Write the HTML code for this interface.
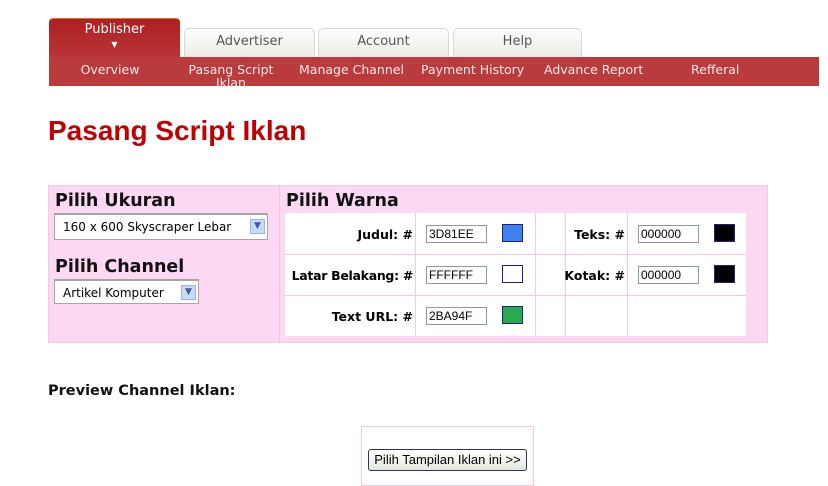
<!DOCTYPE html>
<html><head><style>
body{margin:0;width:828px;height:480px;background:#fff;position:relative;overflow:hidden;font-family:"DejaVu Sans",Verdana,sans-serif}
.a{position:absolute}
.tab{position:absolute;top:28px;height:29px;background:linear-gradient(#fdfdfc,#ecebe7);border:1px solid #d8d8d4;border-bottom:none;border-radius:5px 5px 0 0;box-sizing:border-box;text-align:center;font-size:13px;color:#555;line-height:26px;font-family:"DejaVu Sans",sans-serif}
.sub{position:absolute;top:63px;font-size:12.5px;color:#fbe9e9;text-align:center;line-height:13px;white-space:nowrap}
.lbl{font-weight:bold;font-size:12.5px;color:#000;text-align:right;white-space:nowrap}
.inp{position:absolute;width:61px;height:18px;border:1px solid #8a9ba8;box-sizing:border-box;font:12px "Liberation Sans",Arial,sans-serif;line-height:16px;padding-left:2px;color:#000;background:#fff}
.sw{position:absolute;width:21px;height:18px;border:1px solid #1a237e;box-sizing:border-box}
.h{font-weight:bold;font-size:17.5px;color:#111}
.sel{position:absolute;background:#fff;border:1px solid #a5a5a5;border-top:2px solid #a5a5a5;box-sizing:border-box;font-size:12px;line-height:24px;padding-left:8px;color:#000;white-space:nowrap;overflow:hidden}
.arr{position:absolute;right:2px;top:4px;width:15px;height:15px;background:#c9d8f5;border:1px solid #9fb4e0;box-sizing:border-box;font-size:9px;line-height:13px;text-align:center;color:#3a5b9e}
</style></head><body>
<div class="a" style="left:49px;top:57px;width:770px;height:29px;background:#b93b3d"></div>
<div class="a" style="left:49px;top:18px;width:131px;height:39px;background:linear-gradient(#ad2022,#b83537);border-radius:4px 4px 0 0;border-top:1px solid #d8752f;box-sizing:border-box;text-align:center;color:#fff;font-size:13px;line-height:22px">Publisher<div style="font-size:8px;line-height:8px">▼</div></div>
<div class="tab" style="left:184px;width:131px">Advertiser</div>
<div class="tab" style="left:318px;width:131px">Account</div>
<div class="tab" style="left:453px;width:129px">Help</div>
<div class="sub" style="left:75px;width:70px">Overview</div>
<div class="sub" style="left:180px;width:102px">Pasang Script<br>Iklan</div>
<div class="a" style="left:49px;top:86px;width:770px;height:10px;background:#fff"></div>
<div class="sub" style="left:299px">Manage Channel</div>
<div class="sub" style="left:421px">Payment History</div>
<div class="sub" style="left:544px">Advance Report</div>
<div class="sub" style="left:691px">Refferal</div>
<div class="a" style="left:48px;top:115px;font:bold 28px 'Liberation Sans',Arial,sans-serif;color:#c00000">Pasang Script Iklan</div>
<div class="a" style="left:48px;top:185px;width:720px;height:158px;background:#fcd8f3;border:1px solid #f5c8e8;box-sizing:border-box"></div>
<div class="a" style="left:279px;top:186px;width:1px;height:156px;background:#f5c6e6"></div>
<div class="a h" style="left:55px;top:191px">Pilih Ukuran</div>
<div class="sel" style="left:54px;top:213px;width:214px;height:27px">160 x 600 Skyscraper Lebar<div class="arr">▼</div></div>
<div class="a h" style="left:55px;top:257px">Pilih Channel</div>
<div class="sel" style="left:54px;top:279px;width:145px;height:25px">Artikel Komputer<div class="arr">▼</div></div>
<div class="a h" style="left:286px;top:191px">Pilih Warna</div>
<div class="a" style="left:285px;top:213px;width:461px;height:123px;background:#fff"></div>
<div class="a" style="left:285px;top:254px;width:461px;height:1px;background:#f5c8e8"></div>
<div class="a" style="left:285px;top:295px;width:461px;height:1px;background:#f5c8e8"></div>
<div class="a" style="left:415px;top:213px;width:1px;height:123px;background:#f5c8e8"></div>
<div class="a" style="left:535px;top:213px;width:1px;height:123px;background:#f5c8e8"></div>
<div class="a" style="left:565px;top:213px;width:1px;height:123px;background:#f5c8e8"></div>
<div class="a" style="left:627px;top:213px;width:1px;height:123px;background:#f5c8e8"></div>
<div class="a lbl" style="left:280px;top:227px;width:133px">Judul: #</div>
<div class="a lbl" style="left:280px;top:268px;width:133px;letter-spacing:-0.3px">Latar Belakang: #</div>
<div class="a lbl" style="left:280px;top:309px;width:133px">Text URL: #</div>
<div class="a lbl" style="left:560px;top:227px;width:65px">Teks: #</div>
<div class="a lbl" style="left:560px;top:268px;width:65px">Kotak: #</div>
<div class="inp" style="left:426px;top:225px">3D81EE</div>
<div class="inp" style="left:426px;top:266px">FFFFFF</div>
<div class="inp" style="left:426px;top:307px">2BA94F</div>
<div class="inp" style="left:638px;top:225px">000000</div>
<div class="inp" style="left:638px;top:266px">000000</div>
<div class="sw" style="left:502px;top:224px;background:#3d81ee"></div>
<div class="sw" style="left:502px;top:265px;background:#fff"></div>
<div class="sw" style="left:502px;top:306px;background:#2ba94f"></div>
<div class="sw" style="left:714px;top:224px;background:#000"></div>
<div class="sw" style="left:714px;top:265px;background:#000"></div>
<div class="a" style="left:48px;top:383px;font-weight:bold;font-size:14.5px;color:#111">Preview Channel Iklan:</div>
<div class="a" style="left:361px;top:426px;width:173px;height:60px;border:1px solid #f5c8e8;box-sizing:border-box"></div>
<div class="a" style="left:368px;top:449px;width:159px;height:22px;border:1px solid #2a3a4a;border-radius:3px;box-sizing:border-box;background:linear-gradient(#fff,#e6e6e0);font:13px 'Liberation Sans',Arial,sans-serif;text-align:center;line-height:20px;white-space:nowrap">Pilih Tampilan Iklan ini &gt;&gt;</div>
</body></html>
